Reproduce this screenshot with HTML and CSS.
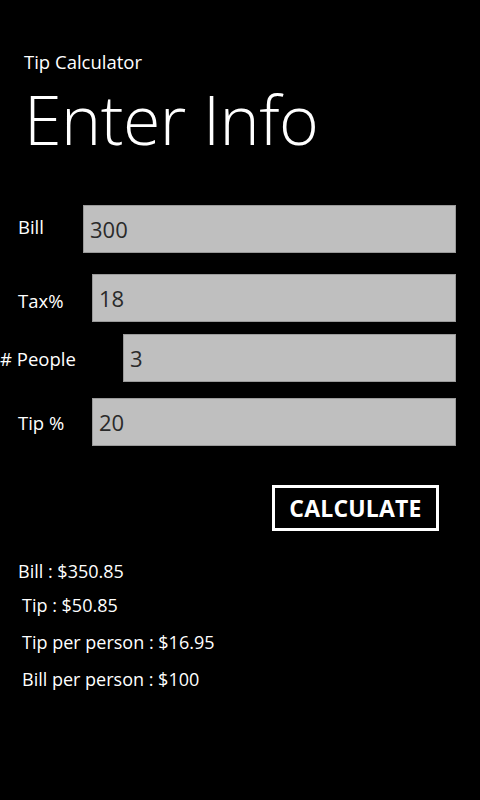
FILE: index.html
```html
<!DOCTYPE html>
<html>
<head>
<meta charset="utf-8">
<link rel="stylesheet" href="styles.css">
</head>
<body>
<div class="page">
  <header class="header">
    <div class="app-title">Tip Calculator</div>
    <h1 class="page-title">Enter Info</h1>
  </header>
  <form class="form">
    <div class="row row-bill">
      <label class="label">Bill</label>
      <div class="field">300</div>
    </div>
    <div class="row row-tax">
      <label class="label">Tax%</label>
      <div class="field">18</div>
    </div>
    <div class="row row-people">
      <label class="label"># People</label>
      <div class="field">3</div>
    </div>
    <div class="row row-tip">
      <label class="label">Tip %</label>
      <div class="field">20</div>
    </div>
    <div class="actions">
      <button type="button" class="btn">CALCULATE</button>
    </div>
  </form>
  <div class="results">
    <div class="result result-first">Bill : $350.85</div>
    <div class="result">Tip : $50.85</div>
    <div class="result">Tip per person : $16.95</div>
    <div class="result">Bill per person : $100</div>
  </div>
</div>
</body>
</html>
```

FILE: styles.css
```css
html, body {
  margin: 0;
  padding: 0;
  background: #000;
  color: #fff;
  font-family: "Open Sans", "Noto Sans", sans-serif;
}
.page {
  width: 480px;
  height: 800px;
  overflow: hidden;
}
.header {
  padding: 50px 0 0 24px;
}
.app-title {
  font-size: 18.5px;
  line-height: 24px;
}
.page-title {
  margin: 9px 0 0 0;
  font-size: 68px;
  font-weight: 300;
  line-height: 72px;
  letter-spacing: -0.5px;
}
.form {
  margin: 0;
  padding: 0 24px 0 0;
}
.row {
  display: flex;
  align-items: center;
  height: 48px;
}
.row-bill { margin-top: 50px; }
.row-tax { margin-top: 21px; }
.row-people { margin-top: 12px; }
.row-tip { margin-top: 16px; }
.label {
  flex: none;
  box-sizing: border-box;
  font-size: 18.5px;
  padding-left: 18px;
}
.row-bill .label { width: 83px; position: relative; top: -3px; }
.row-tax .label { width: 92px; position: relative; top: 2px; }
.row-people .label { width: 123px; padding-left: 0; }
.row-tip .label { width: 92px; }
.field {
  flex: 1;
  height: 48px;
  box-sizing: border-box;
  background: #bfbfbf;
  border: 1px solid #9a9a9a;
  color: #2a2a2a;
  font-size: 22px;
  line-height: 46px;
  padding-left: 6px;
}
.actions {
  display: flex;
  justify-content: flex-end;
  margin-top: 39px;
  padding-right: 17px;
}
.btn {
  background: #000;
  color: #fff;
  border: 3px solid #fff;
  width: 167px;
  height: 46px;
  font-family: "Open Sans", "Noto Sans", sans-serif;
  font-weight: 700;
  font-size: 23px;
  padding: 0;
  letter-spacing: 0.2px;
}
.results {
  padding-top: 28px;
}
.result {
  font-size: 18px;
  line-height: 24px;
  padding-left: 22px;
  margin-bottom: 13px;
}
.result-first {
  padding-left: 18px;
  margin-bottom: 10px;
}
```
